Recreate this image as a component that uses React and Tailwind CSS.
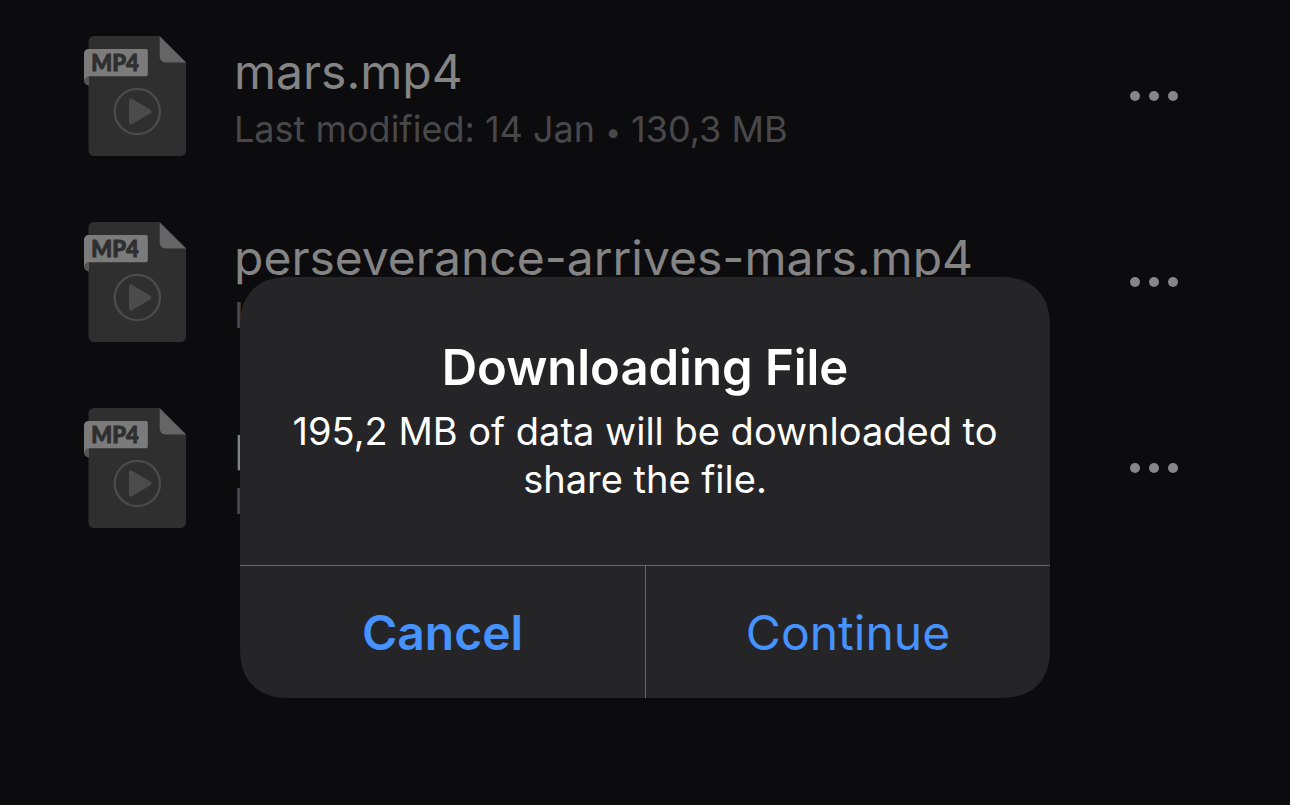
import { useState } from 'react';

const files = [
  { id: 1, name: 'mars.mp4', modified: '14 Jan', size: '130,3 MB' },
  { id: 2, name: 'perseverance-arrives-mars.mp4', modified: '14 Jan', size: '195,2 MB' },
  { id: 3, name: 'phobos.mp4', modified: '14 Jan', size: '88,4 MB' },
];

const VideoFileIcon = () => (
  <svg viewBox="0 0 102 120" className="h-[120px] w-[102px] shrink-0" aria-hidden="true">
    <path d="M10 0H76L102 26V114.500A5.500 5.500 0 0 1 96.500 120H10A5.500 5.500 0 0 1 4.500 114.500V5.500A5.500 5.500 0 0 1 10 0Z" fill="#2f2f2f" />
    <path d="M75.700 0.500L102 26.500H81.500A5.800 5.800 0 0 1 75.700 20.700Z" fill="#656565" />
    <path d="M0 38H5V49.500A5 5 0 0 1 0 44.500Z" fill="#555555" />
    <path d="M4.500 13H62A1.800 1.800 0 0 1 63.800 14.800V38.500A1.800 1.800 0 0 1 62 40.300H5A5 5 0 0 0 0 45V17.500A4.500 4.500 0 0 1 4.500 13Z" fill="#7b7b7b" />
    <text x="31" y="35" textAnchor="middle" fill="#2f2f2f" stroke="#2f2f2f" strokeWidth="0.900" className="font-['Lato'] text-[22px] font-black">MP4</text>
    <circle cx="53.300" cy="75.500" r="22.600" fill="none" stroke="#4b4b4b" strokeWidth="2.400" />
    <path d="M47 64.500L65.500 75.500L47 86.500Z" fill="#4b4b4b" stroke="#4b4b4b" strokeWidth="4" strokeLinejoin="round" />
  </svg>
);

const FileRow = ({ file }) => (
  <li className="flex h-[120px] items-center">
    <VideoFileIcon />
    <div className="ml-12 min-w-0 flex-1 pt-[3px]">
      <p className="truncate text-[48px] leading-[66px] text-[#848484]">{file.name}</p>
      <p className="truncate text-[36px] leading-[48px] text-[#48484a]">
        Last modified: {file.modified} <span className="text-[28px]">•</span> {file.size}
      </p>
    </div>
    <button type="button" aria-label={`More actions for ${file.name}`} className="flex gap-[9px] p-1">
      <span className="size-[10px] rounded-full bg-[#868686]" />
      <span className="size-[10px] rounded-full bg-[#868686]" />
      <span className="size-[10px] rounded-full bg-[#868686]" />
    </button>
  </li>
);

const DownloadAlert = ({ onClose }) => (
  <div className="absolute inset-x-0 top-[277px] flex justify-center px-6">
    <div
      role="alertdialog"
      aria-labelledby="alert-title"
      aria-describedby="alert-message"
      className="w-full max-w-[810px] overflow-hidden rounded-[50px] bg-[#252527] [corner-shape:superellipse(1.25)]"
    >
      <div className="px-9 pt-[58px] pb-[62px] text-center text-white">
        <h2 id="alert-title" className="text-[49px] leading-[66px] font-semibold">Downloading File</h2>
        <p id="alert-message" className="mt-[6px] text-[38px] leading-[48px]">
          195,2 MB of data will be downloaded to share the file.
        </p>
      </div>
      <div className="grid grid-cols-2 border-t border-[#656567] text-[48px] leading-[66px] text-[#4693ff]">
        <button type="button" onClick={onClose} className="pt-[34px] pb-8 font-semibold">
          Cancel
        </button>
        <button type="button" onClick={onClose} className="border-l border-[#656567] pt-[34px] pb-8">
          Continue
        </button>
      </div>
    </div>
  </div>
);

const App = () => {
  const [alertOpen, setAlertOpen] = useState(true);

  return (
    <div className="relative min-h-screen bg-[#0c0c0e] font-['Inter',sans-serif]">
      <ul className="flex flex-col gap-[66px] pt-9 pr-[108px] pl-[84px]">
        {files.map((file) => (
          <FileRow key={file.id} file={file} />
        ))}
      </ul>
      {alertOpen && <DownloadAlert onClose={() => setAlertOpen(false)} />}
    </div>
  );
};

export default App;
